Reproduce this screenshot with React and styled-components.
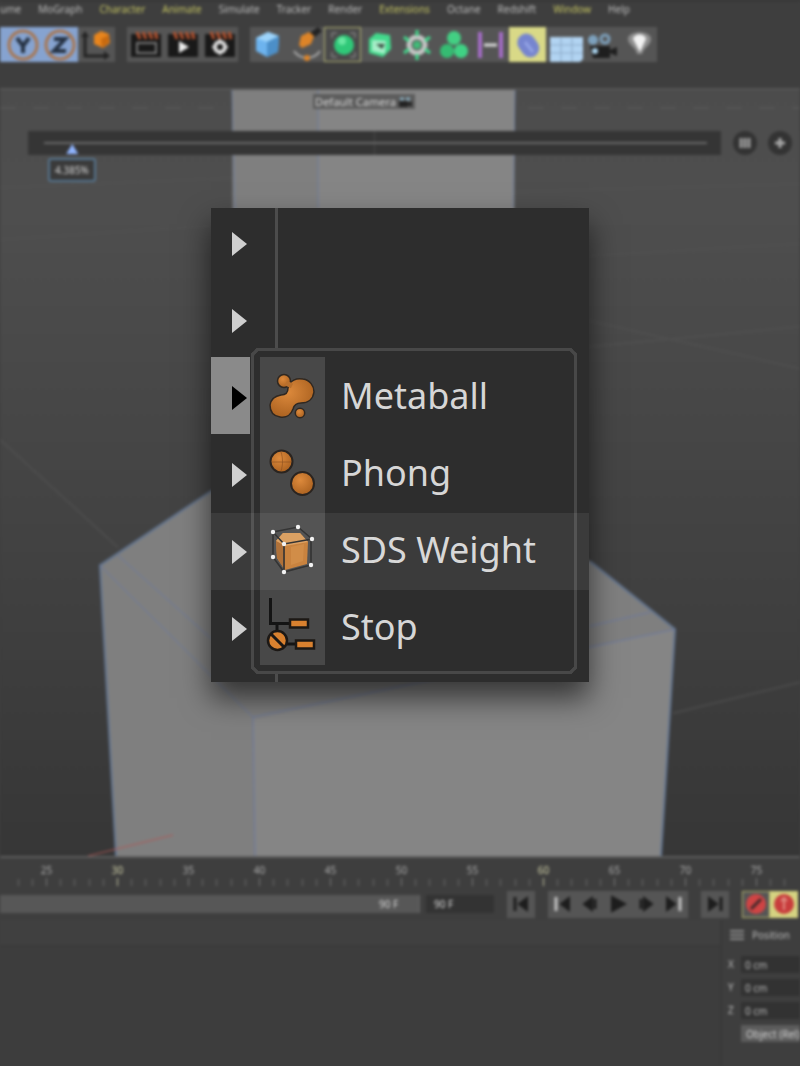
import React from "react";
import styled, {createGlobalStyle, css} from "styled-components";

const GlobalStyle = createGlobalStyle`
  * {
    box-sizing: border-box;
  }

  body {
    margin: 0;
    background: #3e3e3e;
    font-family: "Noto Sans", "Open Sans", sans-serif;
  }

  button, input {
    font: inherit;
    color: inherit;
    border: 0;
    padding: 0;
    margin: 0;
    background: none;
  }
`;

const Page = styled.main`
  position: relative;
  overflow: hidden;
`;

const Editor = styled.div`
  display: flex;
  flex-direction: column;
  min-height: 100vh;
  background: #3e3e3e;
  color: #b8b8b8;
  font-size: 10px;
  line-height: 16px;
  filter: blur(1.4px);
`;

const MenuBar = styled.nav`
  display: flex;
  gap: 17px;
  height: 27px;
  border-top: 1px solid #2e2e2e;
`;

const MenuLink = styled.a`
  color: ${({$accent}) => $accent ? "#c3c262" : "#bcbcbc"};
  text-decoration: none;
`;

const ToolBar = styled.div`
  display: flex;
  gap: 12px;
  height: 61px;
  overflow: hidden;
`;

const ToolGroup = styled.div`
  display: flex;
  align-items: flex-start;
`;

const toolTones = {
  plain: css`background: #555;`,
  axis: css`background: #86a3d0;`,
  active: css`background: #d9d987;`,
  outlined: css`
    background: #4a4a4a;
    box-shadow: inset 0 0 0 1px #b5b575;
  `
};

const ToolButton = styled.button`
  display: grid;
  place-items: center;
  width: ${({$narrow}) => $narrow ? "4px" : "37px"};
  height: 35px;
  overflow: hidden;
  ${({$tone}) => toolTones[$tone || "plain"]}
`;

const Viewport = styled.section`
  position: relative;
  flex: 1;
  min-height: 480px;
  border-top: 2px solid #555;
  border-bottom: 2px solid #5c5c5c;
`;

const Scene = styled.svg`
  position: absolute;
  inset: 0;
  width: 100%;
  height: 100%;
`;

const Hud = styled.div`
  position: relative;
  display: flex;
  flex-direction: column;
  align-items: stretch;
  padding: 4px 8px 0 28px;
`;

const CameraLabel = styled.div`
  display: flex;
  align-items: center;
  align-self: center;
  gap: 2px;
  height: 15px;
  margin-right: 92px;
  padding: 0 2px;
  background: #5c5c5c;
  color: #d8d8d8;
  font-size: 11px;
`;

const Scrubber = styled.div`
  display: flex;
  align-items: center;
  gap: 11px;
  margin-top: 22px;
`;

const ScrubTrack = styled.div`
  flex: 1;
  height: 24px;
  margin-right: 1px;
  padding: 0 14px 0 16px;
  background: linear-gradient(90deg, transparent 50%, #484848 50%, #484848 calc(50% + 1px), transparent calc(50% + 1px)) #353535;
`;

const ScrubRange = styled.input`
  display: block;
  width: 100%;
  height: 24px;
  appearance: none;
  background: linear-gradient(#686868, #686868) center / 100% 2px no-repeat;

  &::-webkit-slider-thumb {
    appearance: none;
    width: 12px;
    height: 10px;
    margin-top: 12px;
    background: #8fb4ff;
    clip-path: polygon(50% 0, 100% 100%, 0 100%);
  }
`;

const RoundButton = styled.button`
  display: grid;
  place-items: center;
  width: 24px;
  height: 24px;
  border-radius: 50%;
  background: #333;
`;

const ScrubValue = styled.output`
  align-self: flex-start;
  width: 48px;
  height: 24px;
  margin: 3px 0 0 20px;
  border: 2px solid #56758f;
  border-radius: 3px;
  background: #3a3a3a;
  color: #d4d4d4;
  line-height: 20px;
  text-align: center;
`;

const Ruler = styled.ol`
  display: flex;
  height: 30px;
  margin: 0;
  padding: 4px 0 0 11px;
  overflow: hidden;
  list-style: none;
`;

const RulerMark = styled.li`
  flex: 0 0 71px;
  display: flex;
  flex-direction: column;
  align-items: center;
  height: 24px;
  color: ${({$key}) => $key ? "#d0d0a8" : "#aaa"};
  background: linear-gradient(90deg, #686868 1px, transparent 1px) 7px 100% / 14px 7px repeat-x;

  &::after {
    content: "";
    width: 1px;
    height: 10px;
    background: ${({$key}) => $key ? "#c0c0a0" : "#777"};
  }
`;

const Transport = styled.div`
  display: flex;
  align-items: center;
  height: 32px;
  overflow: hidden;
`;

const FrameRange = styled.label`
  flex: 0 0 420px;
  display: flex;
  justify-content: flex-end;
  height: 18px;
  padding-right: 16px;
  background: #575757;
  color: #d2d2d2;
  border-right: 1px solid #666;
`;

const FrameInput = styled.input`
  width: ${({$wide}) => $wide ? "68px" : "24px"};
  height: 18px;
  padding-left: ${({$wide}) => $wide ? "8px" : "0"};
  background: ${({$wide}) => $wide ? "#333" : "none"};
  color: #d8d8d8;
`;

const TransportGroup = styled.div`
  flex: none;
  display: flex;
  margin-left: ${({$tight}) => $tight ? "6px" : "13px"};
`;

const TransportButton = styled.button`
  display: grid;
  place-items: center;
  width: 28px;
  height: 27px;
  background: ${({$active}) => $active ? "#d5d381" : "#555"};
  box-shadow: ${({$outlined}) => $outlined ? "inset 0 0 0 1px #b5b56d" : "none"};
`;

const Managers = styled.div`
  display: flex;
  height: 146px;
`;

const MaterialPane = styled.section`
  flex: 1;
  border-right: 2px solid #393939;
  background: linear-gradient(#404040 25px, #3a3a3a 25px, #3a3a3a 27px, #3d3d3d 27px);
`;

const CoordinatePane = styled.section`
  flex: 0 0 78px;
  display: flex;
  flex-direction: column;
  gap: 6px;
  padding: 8px 0 0 6px;
  overflow: hidden;
`;

const PaneTitle = styled.h2`
  display: flex;
  align-items: center;
  gap: 8px;
  margin: 0 0 8px 2px;
  height: 14px;
  font-size: 10px;
  font-weight: 400;
`;

const CoordinateField = styled.label`
  display: grid;
  grid-template-columns: 13px 1fr;
  height: 17px;
`;

const CoordinateInput = styled.input`
  width: 100%;
  padding-left: 4px;
  background: #323232;
`;

const ModeButton = styled.button`
  height: 17px;
  margin-left: 13px;
  padding-left: 5px;
  background: #5c5c5c;
  color: #d4d4d4;
  text-align: left;
  white-space: nowrap;
`;

const Menu = styled.div`
  position: absolute;
  top: 208px;
  left: 50%;
  width: 378px;
  transform: translateX(-50%);
  background: linear-gradient(90deg, transparent 64px, #4c4c4c 64px, #4c4c4c 67px, transparent 67px) #2d2d2d;
  box-shadow: 0 16px 28px rgba(0, 0, 0, 0.6);
`;

const ParentList = styled.div`
  display: flex;
  flex-direction: column;
  align-items: flex-start;
  padding-bottom: 17px;
`;

const ParentItem = styled.button`
  display: flex;
  align-items: flex-end;
  justify-content: flex-end;
  width: 39px;
  height: 77px;
  padding: 0 3px 23px 0;
  background: ${({$open}) => $open ? "#8a8a8a" : "none"};
  color: ${({$open}) => $open ? "#000" : "#cfcfcf"};

  &:first-child {
    height: 72px;
  }
`;

const Submenu = styled.div`
  position: absolute;
  top: 140px;
  left: 40px;
  width: 326px;
  padding: 6px;
  border: 3px solid #484848;
  border-radius: 6px;
  corner-shape: bevel;
  background: #2d2d2d;
`;

const SubmenuItem = styled.button`
  display: flex;
  align-items: center;
  gap: 16px;
  width: 100%;
  height: 77px;
  color: #d6d6d6;
  font-size: 36px;
  line-height: 48px;
  text-align: left;
  white-space: nowrap;
`;

const IconCell = styled.svg`
  flex: none;
  width: 65px;
  height: 77px;
  background: #484848;
`;

const HoverBand = styled.div`
  position: absolute;
  top: 305px;
  left: 0;
  right: 0;
  height: 77px;
  background: rgba(255, 255, 255, 0.07);
  pointer-events: none;
`;

const Glyph = ({size = 36, children}) => (
  <svg width={size} height={size} viewBox={`0 0 ${size} ${size}`} fill="none" aria-hidden="true">{children}</svg>
);

const AxisIcon = ({d}) => <Glyph>
  <circle cx="18" cy="18" r="14" stroke="#a87650" strokeWidth="3"/>
  <path d={d} stroke="#263243" strokeWidth="4"/>
</Glyph>;

const Clapper = ({children}) => <Glyph>
  <rect x="3" y="7" width="30" height="23" fill="#191919"/>
  <path d="M9 5l3 7M15 5l3 7M21 5l3 7M27 5l2 7" stroke="#b5532f" strokeWidth="3"/>
  {children}
</Glyph>;

const icons = {
  x: null,
  y: <AxisIcon d="M12 11l6 8 6-8M18 18v8"/>,
  z: <AxisIcon d="M12 12h11L12 24h12"/>,
  coords: <Glyph>
    <path d="M6 8v21h22" stroke="#222" strokeWidth="3"/>
    <path d="M2 10l4-6 4 6zM25 24l6 5-6 4z" fill="#222"/>
    <path d="M15 8l7-4 8 3 1 9-7 5-9-4z" fill="#e8851d"/>
    <path d="M22 12l8-4 0 8-7 5z" fill="#c86a10"/>
  </Glyph>,
  render: <Clapper><rect x="9" y="16" width="19" height="10" stroke="#777" strokeWidth="2"/></Clapper>,
  play: <Clapper><path d="M14 14l10 6-10 6z" fill="#eee"/></Clapper>,
  settings: <Clapper>
    <circle cx="18" cy="20" r="5" stroke="#ddd" strokeWidth="4"/>
    <path d="M18 12v3M18 25v3M10 20h3M23 20h3" stroke="#ddd" strokeWidth="2"/>
  </Clapper>,
  cube: <Glyph>
    <path d="M5 11l12-6 11 4-1 16-11 5-11-6z" fill="#6db3ee"/>
    <path d="M5 11l12-6 11 4-12 6z" fill="#9dd4fb"/>
    <path d="M28 9l-12 6v15l11-5z" fill="#4c8fc8"/>
  </Glyph>,
  pen: <Glyph>
    <path d="M22 6l8-6 4 4-7 6z" fill="#222"/>
    <path d="M11 18l2-9 8-4 5 4-3 8-9 4z" fill="#dd8428"/>
    <path d="M6 24c6 9 20 9 26 0" stroke="#aaa" strokeWidth="2"/>
    <circle cx="19" cy="31" r="3" fill="#dd8428"/>
  </Glyph>,
  subdivision: <Glyph>
    <circle cx="19" cy="18" r="10" fill="#2fc878"/>
    <circle cx="17" cy="14" r="4" fill="#67e6a0"/>
    <path d="M7 11V6h5M25 6h5v5M7 25v5h5M25 30h5v-5" stroke="#999" strokeWidth="1"/>
  </Glyph>,
  volume: <Glyph>
    <path d="M7 12l7-6 14 2 1 14-8 8-14-4z" fill="#43d98c"/>
    <path d="M10 13l14 1-1 13-13-3z" fill="#a7efc9"/>
    <path d="M14 17h9l-3 5z" fill="#394b40"/>
  </Glyph>,
  array: <Glyph>
    <circle cx="18" cy="18" r="8" stroke="#c5c5c5" strokeWidth="5"/>
    <path d="M18 3v6M18 27v6M5 10l5 4M26 22l5 4M5 26l5-4M26 14l5-4" stroke="#43d98c" strokeWidth="3"/>
    <circle cx="18" cy="18" r="4" fill="#43b978"/>
  </Glyph>,
  cloner: <Glyph>
    <circle cx="18" cy="11" r="7" fill="#43cf83"/>
    <circle cx="11" cy="24" r="7" fill="#35bc72"/>
    <circle cx="25" cy="24" r="7" fill="#3fd284"/>
  </Glyph>,
  spline: <Glyph>
    <path d="M7 5v26M28 5v26" stroke="#a56cc7" strokeWidth="4"/>
    <path d="M11 18h13" stroke="#ddd" strokeWidth="3"/>
  </Glyph>,
  deformer: <Glyph>
    <rect x="9" y="6" width="18" height="25" rx="9" fill="#7685cf" transform="rotate(-35 18 18)"/>
    <path d="M15 15l8 10" stroke="#93a3e5" strokeWidth="3"/>
  </Glyph>,
  floor: <Glyph>
    <path d="M3 10h33v22l-3 3H3z" fill="#b2d4f2"/>
    <path d="M14 11v24M25 11v24M3 18h33M3 26h33" stroke="#8aa8c6" strokeWidth="1"/>
  </Glyph>,
  camera: <Glyph>
    <circle cx="9" cy="13" r="5" fill="#7da1bd"/>
    <circle cx="21" cy="12" r="4" stroke="#7da1bd" strokeWidth="3"/>
    <path d="M6 19h20v4l7-3v9l-7-3v5H9z" fill="#1e1e1e"/>
    <circle cx="11" cy="24" r="3" fill="#a9d2ec"/>
  </Glyph>,
  light: <Glyph>
    <path d="M7 12c0-9 23-9 23 0 0 6-7 8-9 15h-5C15 20 7 18 7 12z" fill="#8e8e8e"/>
    <path d="M12 12c1-6 12-6 13 0l-6 13z" fill="#f2f2f2"/>
  </Glyph>
};

const menuLinks = [
  ["ume"], ["MoGraph"], ["Character", true], ["Animate", true], ["Simulate"], ["Tracker"],
  ["Render"], ["Extensions", true], ["Octane"], ["Redshift"], ["Window", true], ["Help"]
];

const toolGroups = [
  [["x", "axis"], ["y", "axis"], ["z", "axis"], ["coords"]],
  [["render"], ["play"], ["settings"]],
  [["cube"], ["pen"], ["subdivision", "outlined"], ["volume"], ["array"], ["cloner"], ["spline"],
    ["deformer", "active"], ["floor"], ["camera"], ["light"]]
];

const transportGroups = [
  [["Go to start", "M9 11l8-6v12z", "M5 4v14", "#1d1d1d"]],
  [
    ["Previous key", "M10 11l8-6v12z", "M5 4v14", "#c4c4c4"],
    ["Previous frame", "M5 11l8-6v12z", "M16 6v10", "#1d1d1d"],
    ["Play", "M5 4l13 7-13 7z"],
    ["Next frame", "M17 11L9 5v12z", "M6 6v10", "#1d1d1d"],
    ["Next key", "M12 11L4 5v12z", "M17 4v14", "#c4c4c4"]
  ],
  [["Go to end", "M13 11L5 5v12z", "M17 4v14", "#1d1d1d"]]
];

const SceneDrawing = () => (
  <Scene viewBox="0 90 800 767" preserveAspectRatio="none" aria-hidden="true">
    <defs>
      <linearGradient id="sky" x1="0" y1="0" x2="0" y2="1">
        <stop offset="0" stopColor="#4c4c4c"/>
        <stop offset="0.15" stopColor="#4e4e4e"/>
        <stop offset="1" stopColor="#363636"/>
      </linearGradient>
    </defs>
    <rect y="90" width="800" height="767" fill="url(#sky)"/>
    <path d="M0 108h800" stroke="#555" strokeWidth="2" strokeDasharray="16 17"/>
    <path
      d="M0 188l232-10M515 192l285-8M0 240l211-14M589 256l211-12M589 321l211 48M589 347l211-20M0 440l118 108M673 714l127-31"
      stroke="#545454" strokeOpacity="0.6" strokeWidth="2"/>
    <path d="M232 90h86v400h-84z" fill="#7f7f7f"/>
    <path d="M318 90h197l-2 400H318z" fill="#858585"/>
    <path d="M232 90l3 120M318 90v118M515 90l-2 118" stroke="#6e7d9c" strokeWidth="1"/>
    <path d="M100 566l112-75 80-51 160 30 138 92 85 68-14 227H116z" fill="#7f7f7f"/>
    <path d="M253 720l422-90-14 227H255z" fill="#858585"/>
    <path d="M212 491l-112 75 16 291M590 562l85 68-14 227" stroke="#62748f" strokeWidth="2" fill="none"/>
    <path d="M100 566l153 152 2 139M118 556l94 84M253 718l422-88M589 627l61-14"
          stroke="#6a78a2" fill="none"/>
    <path d="M88 857l85-21" stroke="#b05856" strokeWidth="1"/>
  </Scene>
);

const MetaballIcon = () => (
  <IconCell viewBox="0 0 65 77" aria-hidden="true">
    <g fill="url(#copper)" stroke="#302821" strokeWidth="1.5">
      <circle cx="40" cy="56" r="4.7"/>
      <circle cx="24" cy="24" r="6.5"/>
      <path
        d="M29 27C33 22 38 21 43 22C50 23 54 29 54 35C53 42 48 46 41 46C36 46 34 48 33 52C31 58 26 61 20 60C13 59 10 54 10 48C11 42 15 39 21 38C26 38 28 35 28 31Z"/>
    </g>
    <path d="M26 26l6 3" stroke="#b9702d" strokeWidth="5" fill="none"/>
  </IconCell>
);

const PhongIcon = () => (
  <IconCell viewBox="0 0 65 77" aria-hidden="true">
    <g fill="url(#copper)" stroke="#2a2420" strokeWidth="2">
      <circle cx="21.5" cy="27.5" r="11"/>
      <circle cx="42.5" cy="49.5" r="11.5"/>
    </g>
    <path d="M12 28h19M21 18c2 6 2 13 0 19" stroke="#8a4f1e" strokeOpacity="0.6" fill="none"/>
  </IconCell>
);

const WeightIcon = () => (
  <IconCell viewBox="0 0 65 77" aria-hidden="true">
    <path d="M16 30l7-8h17l8 9-1 22-22 6-8-12z" fill="#c57a31"/>
    <path d="M16 30l7-8h17l8 9-23 4z" fill="#d99a58"/>
    <path d="M16 30l9 5v24l-8-12z" fill="#a9672b"/>
    <path d="M31 36l13-3-1 17-12 4z" fill="#d18a40" fillOpacity="0.7"/>
    <path d="M13 21l25-5 14 12-28 5zM13 21v25l11 15 27-7V28M24 33v28" stroke="#252525" strokeWidth="1.6"
          fill="none"/>
    <g fill="#f1f1f1">
      {[[13, 21], [38, 16], [52, 28], [24, 33], [13, 46], [51, 54], [24, 61]].map(([x, y]) =>
        <circle key={`${x}-${y}`} cx={x} cy={y} r="2.2"/>)}
    </g>
  </IconCell>
);

const StopIcon = () => (
  <IconCell viewBox="0 0 65 77" aria-hidden="true">
    <path d="M10.5 10v25.5H30M17 36v7M27 56h9" stroke="#141414" strokeWidth="3" fill="none"/>
    <g fill="#d9812f" stroke="#1c1815" strokeWidth="2.5">
      <rect x="30" y="31.5" width="18" height="8"/>
      <rect x="36" y="52.5" width="18" height="8"/>
      <circle cx="17.5" cy="52.5" r="9.5"/>
    </g>
    <path d="M11 46l13 13" stroke="#1c1815" strokeWidth="3"/>
  </IconCell>
);

const submenuItems = [
  ["Metaball", MetaballIcon],
  ["Phong", PhongIcon],
  ["SDS Weight", WeightIcon],
  ["Stop", StopIcon]
];

const Defs = styled.svg`
  position: absolute;
  width: 0;
  height: 0;
`;

const TagMenu = () => (
  <Menu role="menu" aria-label="Tags">
    <Defs aria-hidden="true">
      <radialGradient id="copper" cx="0.4" cy="0.35" r="0.7">
        <stop offset="0" stopColor="#dd8a3c"/>
        <stop offset="1" stopColor="#a9601f"/>
      </radialGradient>
    </Defs>
    <ParentList>
      {[0, 1, 2, 3, 4, 5].map(i =>
        <ParentItem key={i} type="button" role="menuitem" aria-label={`Group ${i + 1}`} $open={i === 2}>
          <svg width="16" height="26" viewBox="0 0 16 26" aria-hidden="true">
            <path d="M1 1l15 12L1 25z" fill="currentColor"/>
          </svg>
        </ParentItem>)}
    </ParentList>
    <Submenu role="menu" aria-label="Tag list">
      {submenuItems.map(([name, Icon]) =>
        <SubmenuItem key={name} type="button" role="menuitem"><Icon/>{name}</SubmenuItem>)}
    </Submenu>
    <HoverBand/>
  </Menu>
);

export default function App() {
  return <Page>
    <GlobalStyle/>
    <Editor>
      <MenuBar>
        {menuLinks.map(([name, accent]) => <MenuLink key={name} href="#" $accent={accent}>{name}</MenuLink>)}
      </MenuBar>
      <ToolBar>
        {toolGroups.map((group, i) => <ToolGroup key={i}>
          {group.map(([name, tone]) =>
            <ToolButton key={name} type="button" aria-label={name} $tone={tone} $narrow={name === "x"}>
              {icons[name]}
            </ToolButton>)}
        </ToolGroup>)}
      </ToolBar>
      <Viewport>
        <SceneDrawing/>
        <Hud>
          <CameraLabel>
            Default Camera
            <svg width="15" height="12" viewBox="0 0 15 12" aria-hidden="true">
              <path d="M1 5h9v2l4-2v6l-4-2v2H1z" fill="#222"/>
              <path d="M2 3h4M8 3h4" stroke="#8ab" strokeWidth="3"/>
            </svg>
          </CameraLabel>
          <Scrubber>
            <ScrubTrack>
              <ScrubRange type="range" min={1} max={100} step="any" defaultValue={4.385} aria-label="Strength"/>
            </ScrubTrack>
            <RoundButton type="button" aria-label="Pause">
              <Glyph size={12}><path d="M2 1v10M6 1v10M10 1v10" stroke="#999" strokeWidth="3"/></Glyph>
            </RoundButton>
            <RoundButton type="button" aria-label="Add">
              <Glyph size={12}><path d="M6 1v10M1 6h10" stroke="#aaa" strokeWidth="3"/></Glyph>
            </RoundButton>
          </Scrubber>
          <ScrubValue>4.385%</ScrubValue>
        </Hud>
      </Viewport>
      <Ruler>
        {[25, 30, 35, 40, 45, 50, 55, 60, 65, 70, 75].map(frame =>
          <RulerMark key={frame} $key={frame % 30 === 0}>{frame}</RulerMark>)}
      </Ruler>
      <Transport>
        <FrameRange><FrameInput defaultValue="90 F" aria-label="Range end"/></FrameRange>
        <TransportGroup $tight>
          <FrameInput $wide defaultValue="90 F" aria-label="Last frame"/>
        </TransportGroup>
        {transportGroups.map((group, i) => <TransportGroup key={i}>
          {group.map(([name, d, bar, barColor]) => <TransportButton key={name} type="button" aria-label={name}>
            <Glyph size={22}>
              <path d={d} fill="#1d1d1d" stroke="#1d1d1d" strokeWidth="2"/>
              {bar && <path d={bar} stroke={barColor} strokeWidth="3"/>}
            </Glyph>
          </TransportButton>)}
        </TransportGroup>)}
        <TransportGroup>
          <TransportButton type="button" aria-label="Record" $outlined>
            <Glyph size={22}>
              <circle cx="11" cy="11" r="10" fill="#d04444"/>
              <path d="M6 16L16 6" stroke="#40282a" strokeWidth="3"/>
            </Glyph>
          </TransportButton>
          <TransportButton type="button" aria-label="Autokey" $active>
            <Glyph size={22}>
              <circle cx="11" cy="11" r="10" fill="#c83c3c"/>
              <path d="M11 5v12M8 8l3-3 3 3" stroke="#e08a80" strokeWidth="2"/>
            </Glyph>
          </TransportButton>
        </TransportGroup>
      </Transport>
      <Managers>
        <MaterialPane/>
        <CoordinatePane>
          <PaneTitle>
            <Glyph size={14}><path d="M0 3h14M0 7h14M0 11h14" stroke="#888" strokeWidth="2"/></Glyph>
            Position
          </PaneTitle>
          {["X", "Y", "Z"].map(axis => <CoordinateField key={axis}>
            {axis}<CoordinateInput defaultValue="0 cm"/>
          </CoordinateField>)}
          <ModeButton type="button">Object (Rel)</ModeButton>
        </CoordinatePane>
      </Managers>
    </Editor>
    <TagMenu/>
  </Page>;
}
